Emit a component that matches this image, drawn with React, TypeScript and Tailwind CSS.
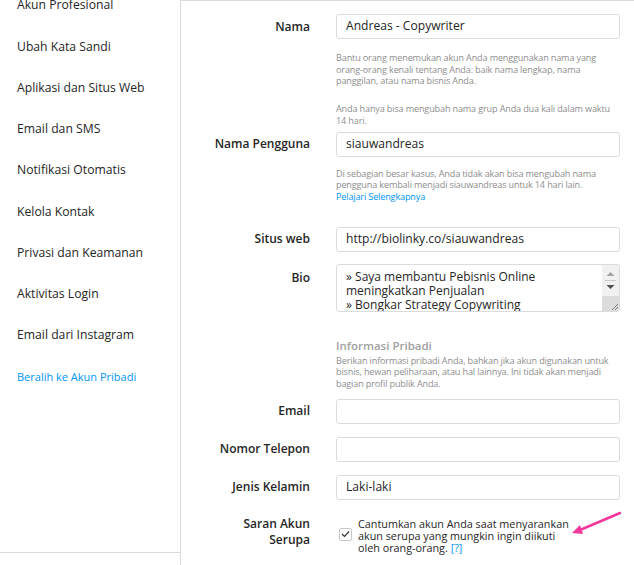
import React from "react";

const menu = [
  "Akun Profesional",
  "Ubah Kata Sandi",
  "Aplikasi dan Situs Web",
  "Email dan SMS",
  "Notifikasi Otomatis",
  "Kelola Kontak",
  "Privasi dan Keamanan",
  "Aktivitas Login",
  "Email dari Instagram",
];

const Label = ({ children }: { children: React.ReactNode }) => (
  <div className="w-[129px] shrink-0 text-right text-[12px] font-semibold text-[#262626] leading-[16px]">
    {children}
  </div>
);

const Field = ({ value }: { value?: string }) => (
  <div className="w-[284px] h-[25px] border border-[#dbdbdb] rounded-[3px] px-[9px] flex items-center text-[12.1px] text-[#262626]">
    {value}
  </div>
);

const Hint = ({ children, className = "" }: { children: React.ReactNode; className?: string }) => (
  <p className={"text-[9.1px] tracking-[-0.15px] leading-[11.7px] text-[#8e8e8e] " + className}>{children}</p>
);

const App = () => {
  return (
    <div className="flex w-[634px] h-[565px] bg-white overflow-hidden relative font-['Open_Sans',sans-serif]">
      <aside className="w-[181px] shrink-0 border-r border-[#dbdbdb]">
        <ul className="-mt-[15px] h-[568px] border-b border-[#dbdbdb]">
          {menu.map((m) => (
            <li key={m} className="h-[41.25px] flex items-center pl-[17px] text-[12.2px] text-[#262626]">
              {m}
            </li>
          ))}
          <li className="h-[41.25px] flex items-center pl-[17px] text-[11px] font-medium text-[#0095f6]">
            Beralih ke Akun Pribadi
          </li>
        </ul>
      </aside>

      <main className="flex-1 border-t border-[#dbdbdb] pt-[13px]">
        <div className="flex items-center gap-[26px]">
          <Label>Nama</Label>
          <Field value="Andreas - Copywriter" />
        </div>
        <div className="ml-[155px] w-[286px] mt-[13px]">
          <Hint>
            Bantu orang menemukan akun Anda menggunakan nama yang orang-orang kenali tentang Anda: baik nama
            lengkap, nama panggilan, atau nama bisnis Anda.
          </Hint>
          <Hint className="mt-[16px]">Anda hanya bisa mengubah nama grup Anda dua kali dalam waktu 14 hari.</Hint>
        </div>

        <div className="flex items-center gap-[26px] mt-[5px]">
          <Label>Nama Pengguna</Label>
          <Field value="siauwandreas" />
        </div>
        <div className="ml-[155px] w-[284px] mt-[11px]">
          <Hint>
            Di sebagian besar kasus, Anda tidak akan bisa mengubah nama pengguna kembali menjadi siauwandreas
            untuk 14 hari lain.
          </Hint>
          <Hint>
            <span className="text-[#0095f6]">Pelajari Selengkapnya</span>
          </Hint>
        </div>

        <div className="flex items-center gap-[26px] mt-[24px]">
          <Label>Situs web</Label>
          <Field value="http://biolinky.co/siauwandreas" />
        </div>

        <div className="flex items-start gap-[26px] mt-[12px]">
          <div className="pt-[6px]">
            <Label>Bio</Label>
          </div>
          <div className="w-[284px] h-[48px] border border-[#dbdbdb] rounded-[3px] flex overflow-hidden">
            <div className="flex-1 pl-[9px] pt-[5px] text-[12px] leading-[14px] text-[#262626] overflow-hidden">
              <p>» Saya membantu Pebisnis Online</p>
              <p>meningkatkan Penjualan</p>
              <p>» Bongkar Strategy Copywriting</p>
            </div>
            <div className="w-[17px] flex flex-col">
              <div className="h-[31px] bg-[#f1f1f1] flex flex-col items-center">
                <svg width="9" height="6" viewBox="0 0 9 6" className="mt-[6px]">
                  <path d="M0.5 5 L4.5 1 L8.5 5 Z" fill="#a3a3a3" />
                </svg>
                <div className="w-[11px] h-px bg-[#c8c8c8] mt-[3px]" />
                <svg width="9" height="6" viewBox="0 0 9 6" className="mt-[3px]">
                  <path d="M0.5 1 L4.5 5 L8.5 1 Z" fill="#505050" />
                </svg>
              </div>
              <div className="flex-1 bg-[#dcdcdc] flex items-end justify-end">
                <svg width="10" height="10" viewBox="0 0 10 10">
                  <path d="M9 3 L3 9 M9 6 L6 9" stroke="#808080" strokeWidth="1" />
                </svg>
              </div>
            </div>
          </div>
        </div>

        <div className="ml-[155px] w-[290px] mt-[27px]">
          <h3 className="text-[11.5px] leading-[14px] font-semibold text-[#a0a0a0]">Informasi Pribadi</h3>
          <Hint className="mt-[2px]">
            Berikan informasi pribadi Anda, bahkan jika akun digunakan untuk bisnis, hewan peliharaan, atau hal
            lainnya. Ini tidak akan menjadi bagian profil publik Anda.
          </Hint>
        </div>

        <div className="flex items-center gap-[26px] mt-[9px]">
          <Label>Email</Label>
          <Field />
        </div>
        <div className="flex items-center gap-[26px] mt-[13px]">
          <Label>Nomor Telepon</Label>
          <Field />
        </div>
        <div className="flex items-center gap-[26px] mt-[13px]">
          <Label>Jenis Kelamin</Label>
          <Field value="Laki-laki" />
        </div>

        <div className="flex items-start gap-[26px] mt-[16px]">
          <Label>
            Saran Akun
            <br />
            Serupa
          </Label>
          <div className="flex items-start gap-[6px] pt-[2px]">
            <div className="mt-[10px] ml-[3px] w-[13px] h-[13px] border border-[#c8c8c8] rounded-[2px] flex items-center justify-center">
              <svg width="9" height="8" viewBox="0 0 9 8">
                <path d="M1 4 L3.5 6.5 L8 1.5" stroke="#333" strokeWidth="1.2" fill="none" />
              </svg>
            </div>
            <p className="w-[215px] text-[10.8px] leading-[12px] text-[#262626]">
              Cantumkan akun Anda saat menyarankan akun serupa yang mungkin ingin diikuti oleh orang-orang.{" "}
              <span className="text-[#0095f6]">[?]</span>
            </p>
          </div>
        </div>
      </main>

      <svg className="absolute left-[568px] top-[508px]" width="60" height="30" viewBox="0 0 60 30">
        <path d="M52 5 L12 22" stroke="#f2389c" strokeWidth="2.5" strokeLinecap="round" />
        <path d="M4 25 L12 17 L15 26 Z" fill="#f2389c" />
      </svg>
    </div>
  );
};

export default App;
